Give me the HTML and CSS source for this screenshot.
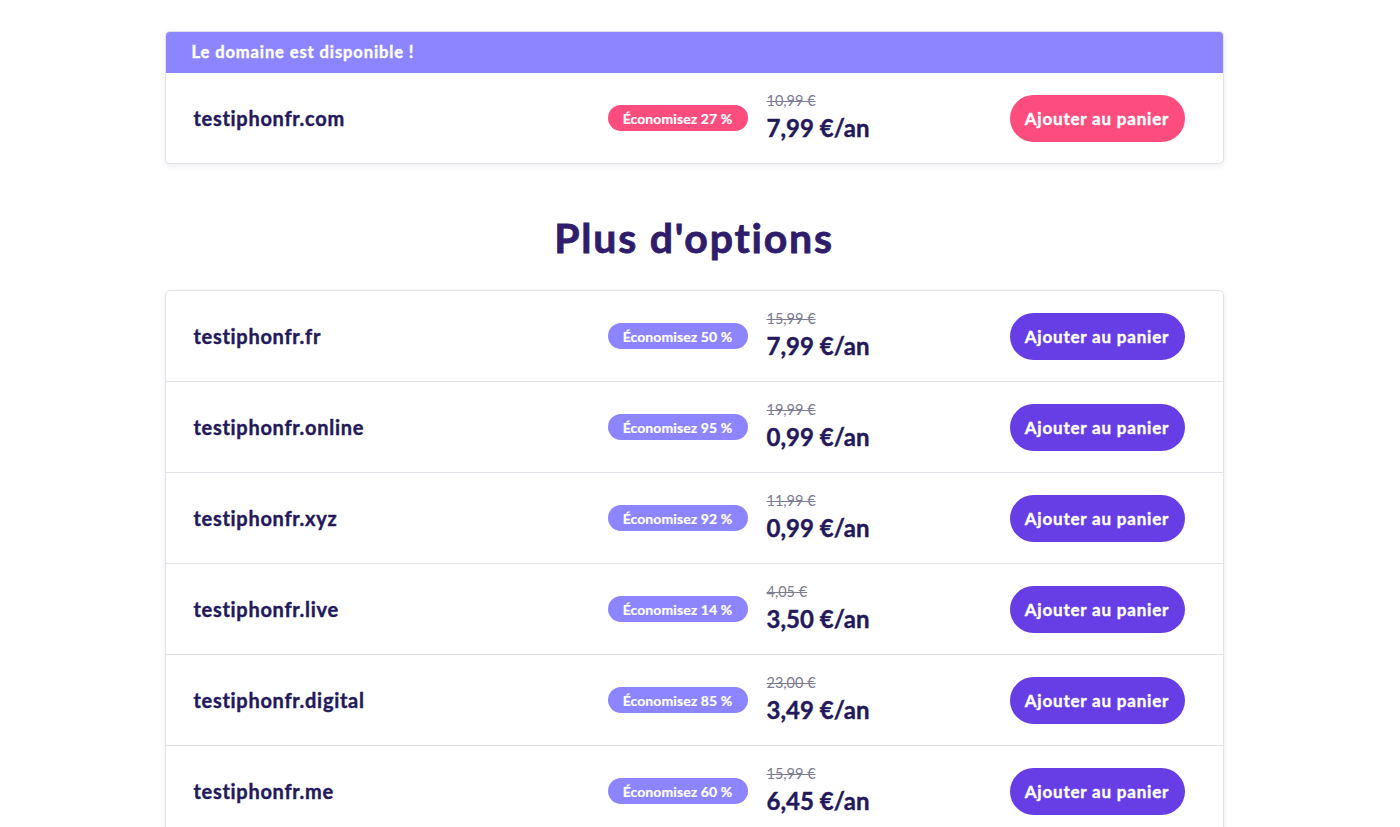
FILE: index.html
```html
<!DOCTYPE html>
<html lang="fr">
<head>
<meta charset="utf-8">
<title>Domaines</title>
<link rel="stylesheet" href="styles.css">
</head>
<body>
<main class="page">
  <section class="card">
    <div class="card-head">Le domaine est disponible !</div>
    <div class="row">
      <div class="domain">testiphonfr.com</div>
      <div><span class="badge badge-pink">Économisez 27 %</span></div>
      <div class="price"><span class="old">10,99 €</span><span class="new">7,99 €/an</span></div>
      <button class="btn btn-pink">Ajouter au panier</button>
    </div>
  </section>

  <h2 class="title">Plus d'options</h2>

  <section class="card">
    <div class="row">
      <div class="domain">testiphonfr.fr</div>
      <div><span class="badge">Économisez 50 %</span></div>
      <div class="price"><span class="old">15,99 €</span><span class="new">7,99 €/an</span></div>
      <button class="btn">Ajouter au panier</button>
    </div>
    <div class="row">
      <div class="domain">testiphonfr.online</div>
      <div><span class="badge">Économisez 95 %</span></div>
      <div class="price"><span class="old">19,99 €</span><span class="new">0,99 €/an</span></div>
      <button class="btn">Ajouter au panier</button>
    </div>
    <div class="row">
      <div class="domain">testiphonfr.xyz</div>
      <div><span class="badge">Économisez 92 %</span></div>
      <div class="price"><span class="old">11,99 €</span><span class="new">0,99 €/an</span></div>
      <button class="btn">Ajouter au panier</button>
    </div>
    <div class="row">
      <div class="domain">testiphonfr.live</div>
      <div><span class="badge">Économisez 14 %</span></div>
      <div class="price"><span class="old">4,05 €</span><span class="new">3,50 €/an</span></div>
      <button class="btn">Ajouter au panier</button>
    </div>
    <div class="row">
      <div class="domain">testiphonfr.digital</div>
      <div><span class="badge">Économisez 85 %</span></div>
      <div class="price"><span class="old">23,00 €</span><span class="new">3,49 €/an</span></div>
      <button class="btn">Ajouter au panier</button>
    </div>
    <div class="row">
      <div class="domain">testiphonfr.me</div>
      <div><span class="badge">Économisez 60 %</span></div>
      <div class="price"><span class="old">15,99 €</span><span class="new">6,45 €/an</span></div>
      <button class="btn">Ajouter au panier</button>
    </div>
  </section>
</main>
</body>
</html>
```
FILE: styles.css
```css
* { box-sizing: border-box; }
html, body { margin: 0; padding: 0; background: #ffffff; }
body {
  font-family: "Lato", "Liberation Sans", sans-serif;
  color: #23195a;
  padding-right: 12px;
}
.page {
  width: 1059px;
  margin: 0 auto;
  padding: 31px 0 40px;
}
.card {
  background: #fff;
  border: 1px solid #e2e2e8;
  border-radius: 5px;
  box-shadow: 0 2px 6px rgba(30, 20, 80, 0.08);
  overflow: hidden;
}
.card-head {
  height: 42px;
  background: #8c85ff;
  color: #fff;
  font-weight: 700;
  font-size: 16.5px;
  letter-spacing: 0.9px;
  -webkit-text-stroke: 0.4px #fff;
  line-height: 42px;
  padding-left: 27px;
  margin: -1px -1px 0;
}
.row {
  display: grid;
  grid-template-columns: 1fr 140px 262px 175px;
  align-items: center;
  height: 90px;
  padding: 0 38px 0 28px;
}
.row + .row { border-top: 1px solid #e2e2e8; height: 91px; }
.domain {
  font-size: 20px;
  font-weight: 700;
  color: #23195a;
  letter-spacing: 0.7px;
  -webkit-text-stroke: 0.4px #23195a;
  margin-top: -1px;
}
.badge {
  display: flex;
  align-items: center;
  justify-content: center;
  width: 140px;
  height: 26px;
  border-radius: 13px;
  background: #8c85ff;
  color: #fff;
  font-weight: 700;
  font-size: 14px;
  letter-spacing: 0.1px;
  -webkit-text-stroke: 0.2px #fff;
}
.badge-pink { background: #fc4d7e; }
.price {
  display: flex;
  flex-direction: column;
  padding-left: 19px;
  margin-top: -1px;
}
.old {
  font-size: 14.5px;
  color: #7d7b90;
  text-decoration: line-through;
  line-height: 18px;
}
.new {
  font-size: 24px;
  font-weight: 700;
  color: #23195a;
  line-height: 30px;
  margin-top: 3px;
  -webkit-text-stroke: 0.4px #23195a;
}
.btn {
  width: 175px;
  height: 47px;
  border: none;
  border-radius: 24px;
  background: #673de6;
  color: #fff;
  font-family: inherit;
  font-weight: 700;
  font-size: 17px;
  letter-spacing: 0.8px;
  -webkit-text-stroke: 0.4px #fff;
  cursor: pointer;
}
.btn-pink { background: #fc4d7e; }
.title {
  text-align: center;
  font-size: 41px;
  font-weight: 700;
  line-height: 48px;
  letter-spacing: 1.8px;
  -webkit-text-stroke: 0.8px #2f1c6a;
  color: #2f1c6a;
  margin: 50px 0 28px;
}
```
